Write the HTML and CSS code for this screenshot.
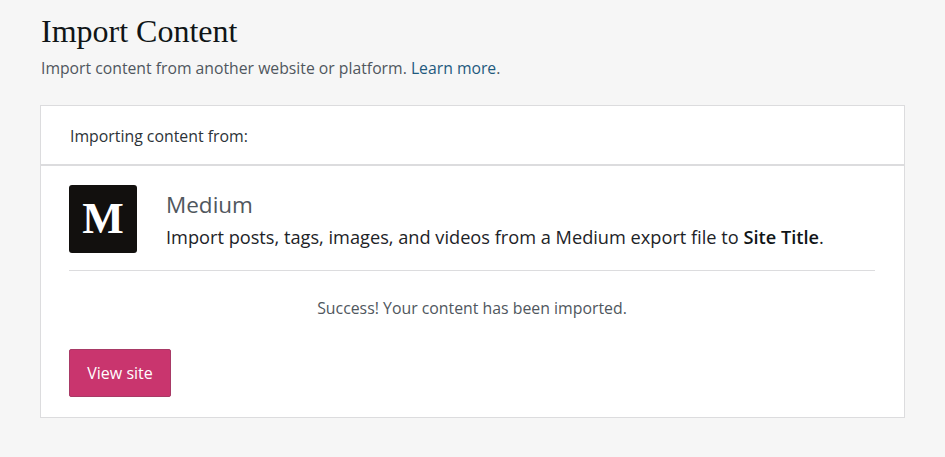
FILE: index.html
```html
<!DOCTYPE html>
<html lang="en">
<head>
<meta charset="utf-8">
<title>Import Content</title>
<link rel="stylesheet" href="styles.css">
</head>
<body>
<main class="page">
  <h1 class="title">Import Content</h1>
  <p class="subtitle">Import content from another website or platform. <a class="link" href="#">Learn more</a>.</p>
  <section class="card">
    <header class="card-head">Importing content from:</header>
    <div class="card-body">
      <div class="source">
        <div class="logo">M</div>
        <div class="source-text">
          <h2 class="source-name">Medium</h2>
          <p class="source-desc">Import posts, tags, images, and videos from a Medium export file to <strong class="site">Site Title</strong>.</p>
        </div>
      </div>
      <p class="success">Success! Your content has been imported.</p>
      <a class="button" href="#">View site</a>
    </div>
  </section>
</main>
</body>
</html>
```
FILE: styles.css
```css
html, body { margin: 0; padding: 0; }
body {
  background: #f6f6f6;
  color: #2c3338;
  font-family: "Open Sans", "Noto Sans", sans-serif;
  height: 457px;
  overflow: hidden;
}
.page { padding: 13px 40px 0; }
.title {
  margin: 0 0 0 1px;
  font-family: "Liberation Serif", serif;
  font-weight: 400;
  font-size: 32px;
  line-height: 36px;
  color: #101517;
}
.subtitle {
  margin: 9px 0 0 1px;
  font-size: 15.75px;
  line-height: 20px;
  color: #50575e;
}
.link { color: #1f5a7e; text-decoration: none; }
.card {
  margin-top: 27px;
  background: #fff;
  border: 1px solid #dcdcde;
  box-sizing: border-box;
  height: 313px;
}
.card-head {
  height: 60px;
  box-sizing: border-box;
  padding: 20px 29px 0;
  font-size: 15.85px;
  line-height: 20px;
  color: #2c3338;
  border-bottom: 2px solid #dcdcde;
}
.card-body { padding: 19px 29px 0 28px; }
.source {
  display: flex;
  gap: 29px;
  padding-bottom: 17px;
  border-bottom: 1px solid #dcdcde;
}
.logo {
  width: 68px;
  height: 68px;
  flex: none;
  background: #12100e;
  border-radius: 3px;
  color: #fff;
  font-family: "Liberation Serif", serif;
  font-weight: 700;
  font-size: 44px;
  line-height: 68px;
  text-align: center;
}
.source-text { padding-top: 5px; }
.source-name {
  margin: 0;
  font-size: 22.5px;
  line-height: 30px;
  font-weight: 400;
  color: #50575e;
}
.source-desc {
  margin: 5px 0 0;
  font-size: 18.2px;
  line-height: 24px;
  color: #1d2327;
}
.site { font-weight: 600; color: #101517; }
.success {
  margin: 26px 0 0;
  text-align: center;
  font-size: 15.85px;
  line-height: 22px;
  color: #50575e;
}
.button {
  display: flex;
  align-items: center;
  justify-content: center;
  box-sizing: border-box;
  margin-top: 30px;
  width: 102px;
  height: 48px;
  background: #c9356e;
  border: 1px solid #a83a66;
  border-radius: 2px;
  color: #fff;
  font-size: 16px;
  text-decoration: none;
}
```
